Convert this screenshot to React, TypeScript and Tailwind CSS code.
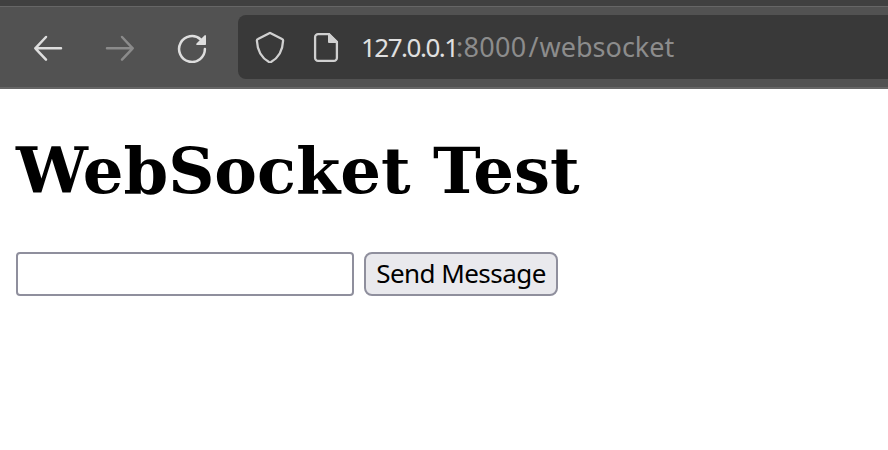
function BackIcon() {
  return (
    <svg className="h-8 w-8 shrink-0 text-[#dedede]" viewBox="0 0 32 32" fill="none" stroke="currentColor" strokeWidth="2.5" strokeLinecap="round" strokeLinejoin="round">
      <path d="M14 6 3.300 17.300 14 28.600M3.300 17.300H29" />
    </svg>
  );
}

function ForwardIcon() {
  return (
    <svg className="h-8 w-8 shrink-0 text-[#8b8b8b]" viewBox="0 0 32 32" fill="none" stroke="currentColor" strokeWidth="2.5" strokeLinecap="round" strokeLinejoin="round">
      <path d="M18 6 28.700 17.300 18 28.600M28.700 17.300H3" />
    </svg>
  );
}

function ReloadIcon() {
  return (
    <svg className="h-8 w-8 shrink-0 text-[#dedede]" viewBox="0 0 32 32" fill="none">
      <path d="M28.900 18a12.900 12.900 0 1 1-4.200-9.500" stroke="currentColor" strokeWidth="2.500" strokeLinecap="round" />
      <path d="M30 4.800v8.400a.8.8 0 0 1-.8.8h-8.200a.8.8 0 0 1-.5-1.400l8.200-8.300a.8.8 0 0 1 1.300.5z" fill="currentColor" />
    </svg>
  );
}

function ShieldIcon() {
  return (
    <svg className="h-8 w-8 shrink-0 text-[#d0d0d0]" viewBox="0 0 32 32" fill="none" stroke="currentColor" strokeWidth="2.3" strokeLinejoin="round">
      <path d="M15.300 1.700a1.500 1.500 0 0 1 1.400 0l11.300 6c.8.400 1.200 1 1.100 1.900C28.600 20.200 25 27 17 31.500q-1 .5-2 0C7 27 3.400 20.200 2.900 9.600c-.1-.9.300-1.500 1.100-1.900z" transform="translate(0 .5) scale(1 .97)" />
    </svg>
  );
}

function PageIcon() {
  return (
    <svg className="h-8 w-8 shrink-0 text-[#d0d0d0]" viewBox="0 0 32 32" fill="none">
      <path d="M18.500 3.100H8.100a3 3 0 0 0-3 3v20.800a3 3 0 0 0 3 3h15.800a3 3 0 0 0 3-3V11.200z" stroke="currentColor" strokeWidth="2.3" strokeLinejoin="round" />
      <path d="M18 2h1.500L28 10.500V12h-9a1 1 0 0 1-1-1z" fill="currentColor" />
    </svg>
  );
}

export default function App() {
  return (
    <div className="flex h-[450px] w-[888px] flex-col overflow-hidden bg-white">
      <div className="h-1.5 shrink-0 bg-[#404040]" />
      <header className="flex h-[83px] shrink-0 items-start border-t border-b-2 border-t-[#666666] border-b-[#666666] bg-[#525252] pt-2 pl-8">
        <nav className="flex h-16 w-[206px] shrink-0 items-center gap-10">
          <BackIcon />
          <ForwardIcon />
          <ReloadIcon />
        </nav>
        <div className="flex h-16 flex-1 items-center rounded-l-lg bg-[#393939] pl-4">
          <ShieldIcon />
          <div className="ml-6 flex pb-px">
            <PageIcon />
          </div>
          <div className="ml-[19px] flex items-baseline whitespace-nowrap font-['Noto_Sans',sans-serif] text-[27px] leading-8">
            <span className="w-[94px] text-[26px] tracking-[-1.5px] text-[#e0e0e0]">127.0.0.1</span>
            <span className="ml-px tracking-[0.3px] text-[#8c8c8c]">:8000</span>
            <span className="ml-0.5 text-[#8c8c8c]">/</span>
            <span className="ml-px text-[#8c8c8c]">websocket</span>
          </div>
        </div>
      </header>
      <main className="px-4 pt-11">
        <h1 className="whitespace-nowrap font-['DejaVu_Serif',serif] text-[64px] leading-[75px] font-bold text-black">WebSocket Test</h1>
        <form className="mt-11 flex gap-2.5" onSubmit={(event) => event.preventDefault()}>
          <input type="text" aria-label="Message" className="h-11 w-[338px] rounded-[4px] border-2 border-[#8f8f9d] bg-white px-1 outline-none" />
          <button type="submit" className="h-11 w-[194px] rounded-lg border-2 border-[#8f8f9d] bg-[#e9e9ed] pb-0.5 font-['Noto_Sans',sans-serif] text-[26px] leading-[38px] tracking-[-0.55px] whitespace-nowrap text-black">Send Message</button>
        </form>
      </main>
    </div>
  );
}
